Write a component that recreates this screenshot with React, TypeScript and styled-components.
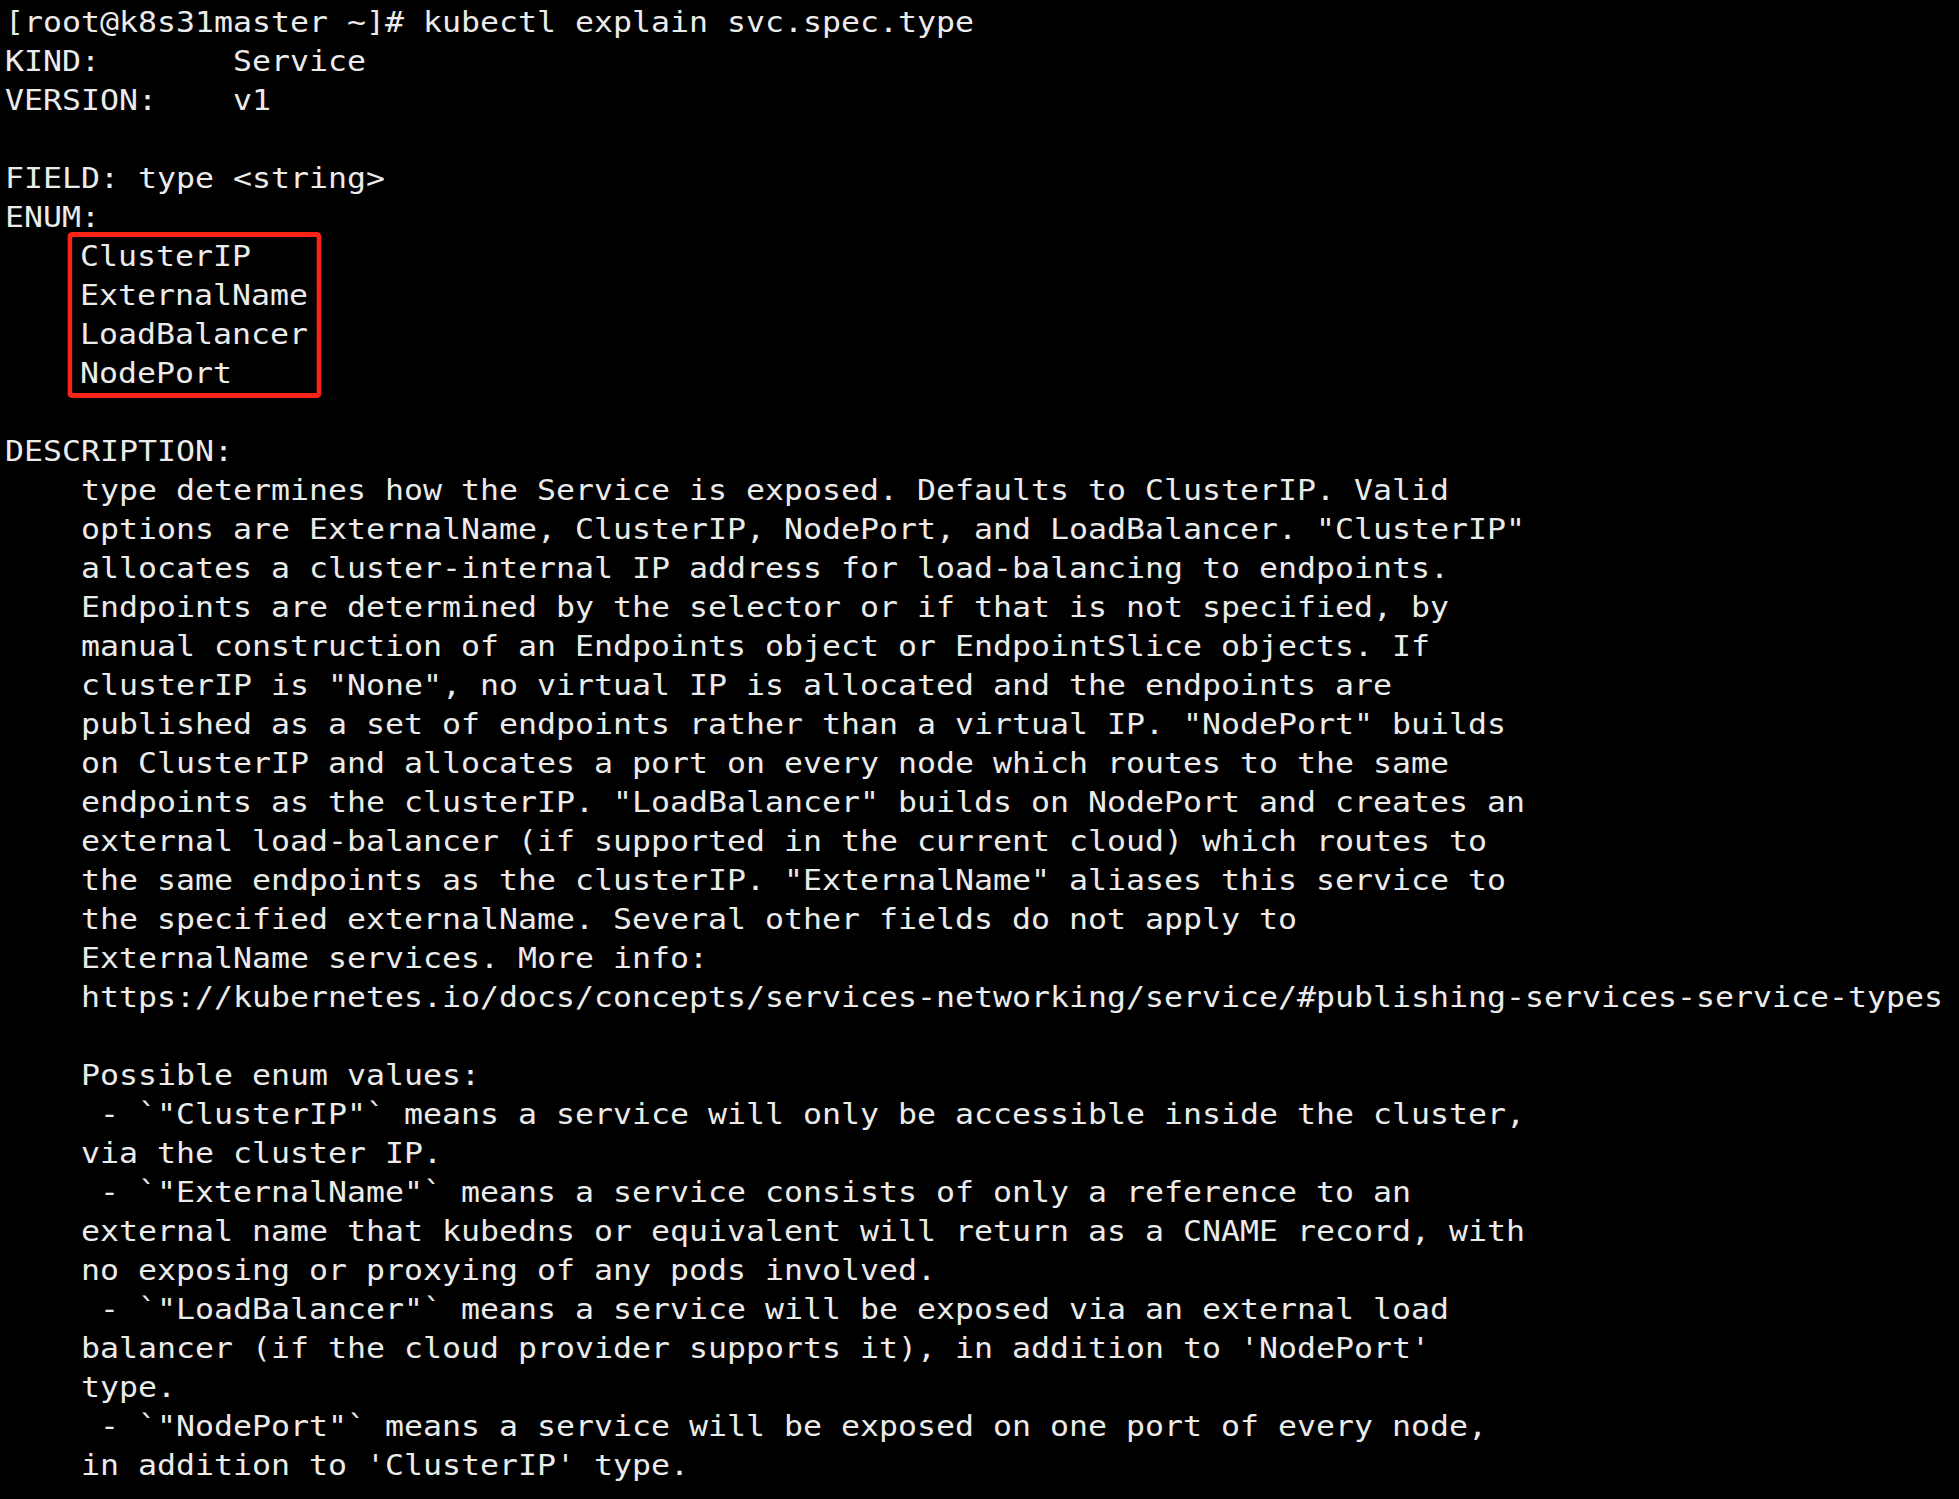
import React from "react";
import styled, { createGlobalStyle } from "styled-components";

const CELL = 19;
const FONT_SIZE = 28;
const NATURAL_CELL = FONT_SIZE * 0.60205;
const STRETCH = CELL / NATURAL_CELL;
const PAD_LEFT = 5;

const GlobalStyle = createGlobalStyle`
  html, body {
    margin: 0;
    padding: 0;
    background: #000000;
    width: 1959px;
    height: 1499px;
    overflow: hidden;
  }
  #root {
    background: #000000;
  }
`;

const Screen = styled.main`
  width: 1959px;
  height: 1499px;
  background: #000000;
  overflow: hidden;
`;

const Terminal = styled.section<{ $stretch: number }>`
  padding: 3px 0 0 ${(p) => PAD_LEFT / p.$stretch}px;
  font-family: "DejaVu Sans Mono", "Liberation Mono", monospace;
  font-size: ${FONT_SIZE}px;
  line-height: 39px;
  color: #ebebeb;
  white-space: pre;
  transform: scaleX(${(p) => p.$stretch});
  transform-origin: 0 0;
  -webkit-font-smoothing: antialiased;
`;

const Line = styled.div`
  height: 39px;
  white-space: pre;
`;

const EnumBox = styled.div`
  display: inline-block;
  vertical-align: top;
  margin: -5px 0 -5px ${60.3 - PAD_LEFT / STRETCH}px;
  padding: 0 ${8.3 - 0.9}px 0 ${5.7 + 0.9}px;
  border: 5px solid #fb2216;
  border-left-width: ${5 / STRETCH}px;
  border-right-width: ${5 / STRETCH}px;
  border-radius: 4px;
`;

const header = [
  "[root@k8s31master ~]# kubectl explain svc.spec.type",
  "KIND:       Service",
  "VERSION:    v1",
  "",
  "FIELD: type <string>",
  "ENUM:",
];

const enumValues = ["ClusterIP", "ExternalName", "LoadBalancer", "NodePort"];

const body = [
  "",
  "DESCRIPTION:",
  "    type determines how the Service is exposed. Defaults to ClusterIP. Valid",
  '    options are ExternalName, ClusterIP, NodePort, and LoadBalancer. "ClusterIP"',
  "    allocates a cluster-internal IP address for load-balancing to endpoints.",
  "    Endpoints are determined by the selector or if that is not specified, by",
  "    manual construction of an Endpoints object or EndpointSlice objects. If",
  '    clusterIP is "None", no virtual IP is allocated and the endpoints are',
  '    published as a set of endpoints rather than a virtual IP. "NodePort" builds',
  "    on ClusterIP and allocates a port on every node which routes to the same",
  '    endpoints as the clusterIP. "LoadBalancer" builds on NodePort and creates an',
  "    external load-balancer (if supported in the current cloud) which routes to",
  '    the same endpoints as the clusterIP. "ExternalName" aliases this service to',
  "    the specified externalName. Several other fields do not apply to",
  "    ExternalName services. More info:",
  "    https://kubernetes.io/docs/concepts/services-networking/service/#publishing-services-service-types",
  "",
  "    Possible enum values:",
  '     - `"ClusterIP"` means a service will only be accessible inside the cluster,',
  "    via the cluster IP.",
  '     - `"ExternalName"` means a service consists of only a reference to an',
  "    external name that kubedns or equivalent will return as a CNAME record, with",
  "    no exposing or proxying of any pods involved.",
  '     - `"LoadBalancer"` means a service will be exposed via an external load',
  "    balancer (if the cloud provider supports it), in addition to 'NodePort'",
  "    type.",
  '     - `"NodePort"` means a service will be exposed on one port of every node,',
  "    in addition to 'ClusterIP' type.",
];

export default function App() {
  return (
    <>
      <GlobalStyle />
      <Screen>
        <Terminal $stretch={STRETCH}>
          {header.map((l, i) => (
            <Line key={`h${i}`}>{l || " "}</Line>
          ))}
          <EnumBox>
            {enumValues.map((v) => (
              <Line key={v}>{v}</Line>
            ))}
          </EnumBox>
          {body.map((l, i) => (
            <Line key={`b${i}`}>{l || " "}</Line>
          ))}
        </Terminal>
      </Screen>
    </>
  );
}
